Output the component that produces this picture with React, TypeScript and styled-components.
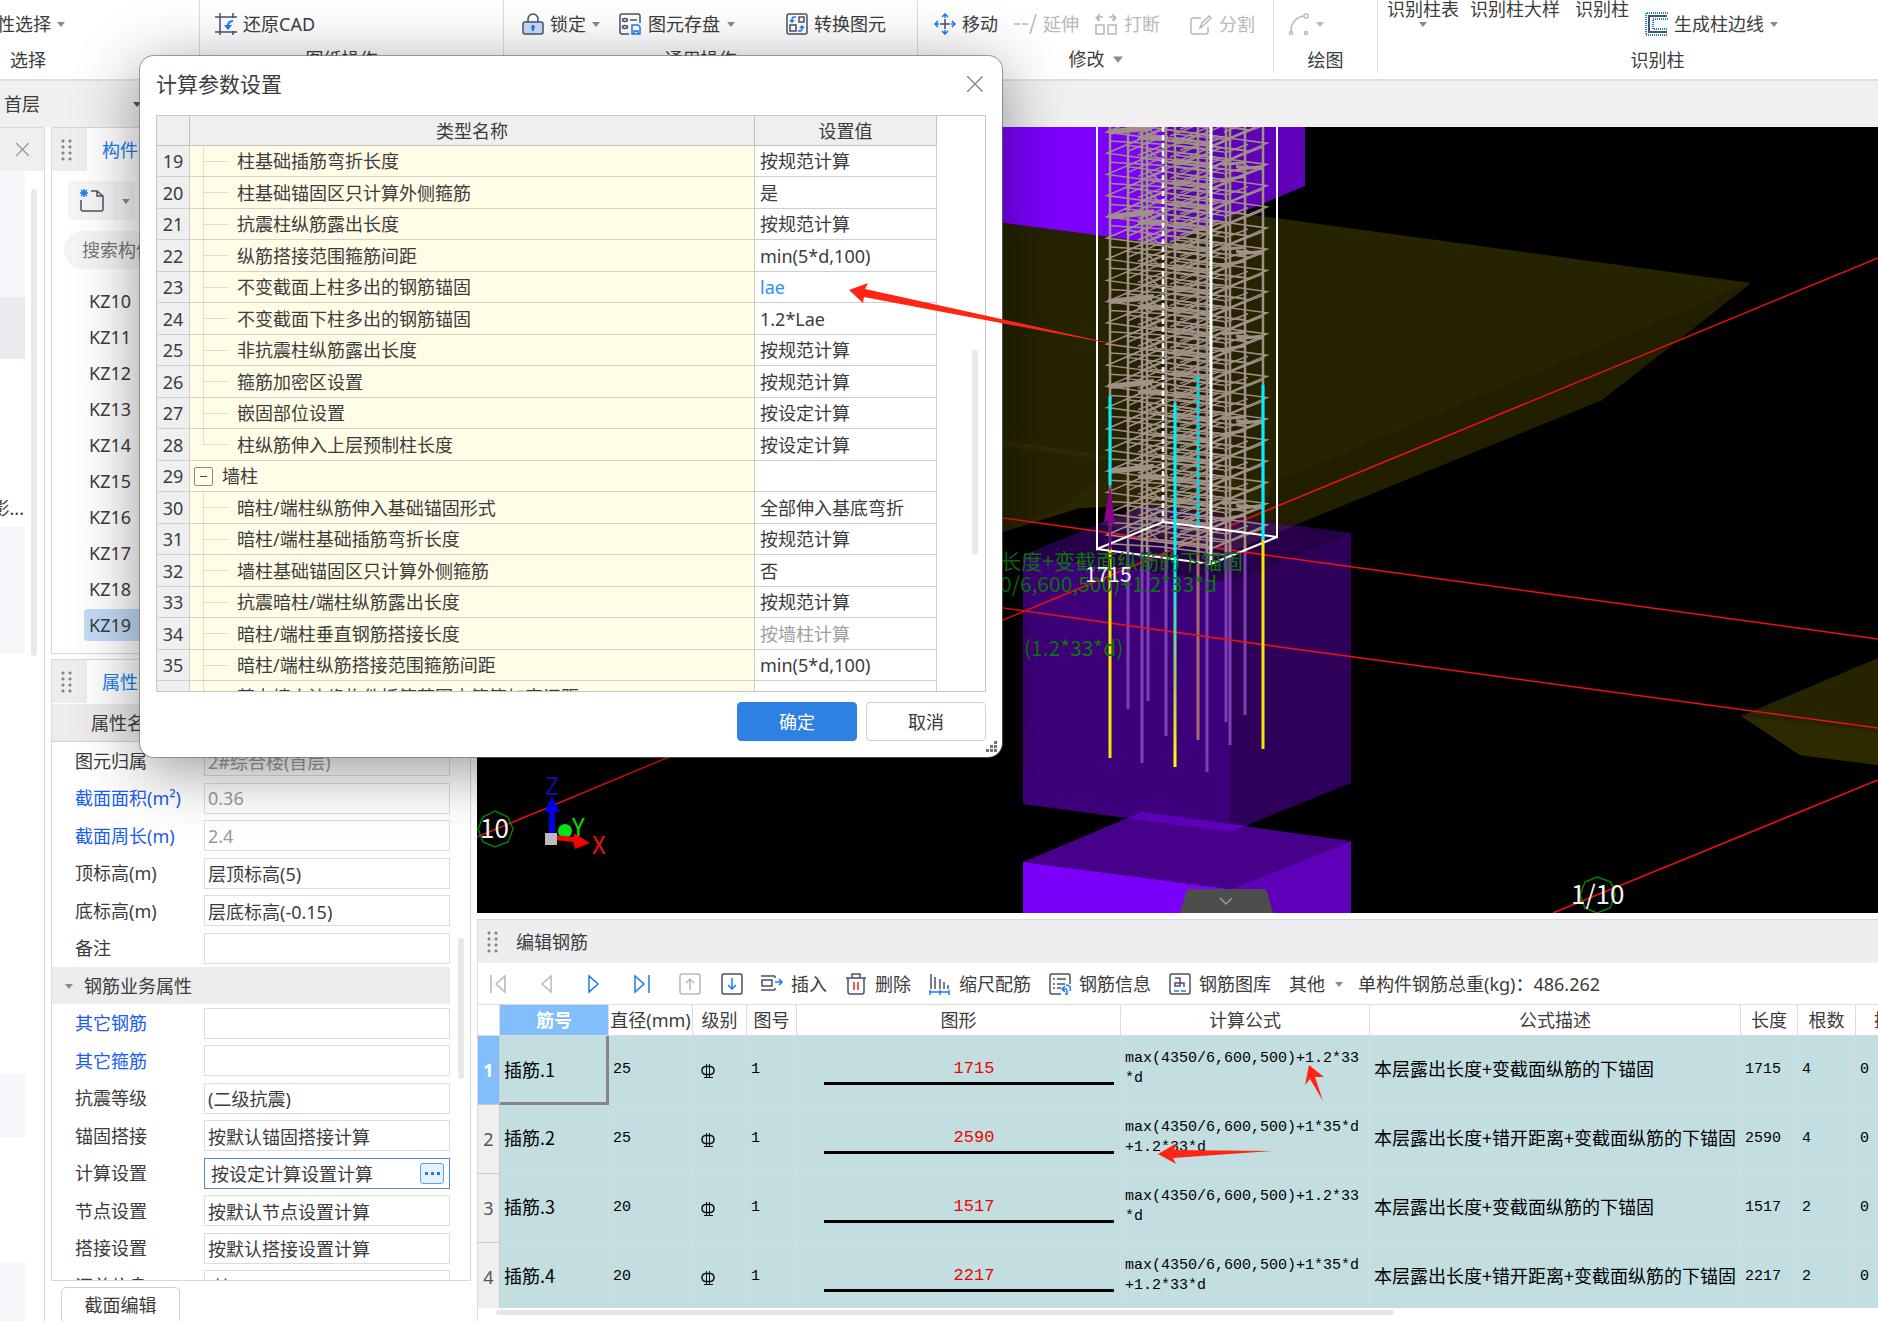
import React from 'react';
import styled, { createGlobalStyle, css } from 'styled-components';

const UI_FONT = '"Noto Sans", "Noto Sans CJK SC", sans-serif';
const MONO_FONT = '"Liberation Mono", "Noto Sans CJK SC", monospace';

const GlobalStyle = createGlobalStyle`
  *, *::before, *::after { box-sizing: border-box; }
  body { margin: 0; background: #fff; font-family: ${UI_FONT}; font-size: 18px; line-height: 24px; color: #3c3c3c; overflow: hidden; }
  button, input, select { font: inherit; color: inherit; margin: 0; padding: 0; border: 0; background: none; }
  svg { display: block; flex: none; }
`;

/* ---------- shared pieces ---------- */

const Page = styled.div`
  position: relative;
  display: flex;
  flex-direction: column;
  height: 100vh;
  overflow: hidden;
`;

const CaretSvg = styled.svg<{ $tone?: string }>`
  fill: ${p => p.$tone || '#8a8a8a'};
`;

const Caret = ({ tone, size = 8 }: { tone?: string; size?: number }) => (
  <CaretSvg $tone={tone} width={size} height={size} viewBox="0 0 8 8"><path d="M0 2h8L4 7z" /></CaretSvg>
);

const Grip = styled.span`
  flex: none;
  width: 11px;
  height: 22px;
  background: radial-gradient(circle at 2px 2px, #858585 1px, transparent 2px) 0 0 / 7px 6px;
`;

/* ---------- ribbon ---------- */

const Ribbon = styled.header`
  display: flex;
  flex: none;
  height: 81px;
  border-bottom: 2px solid #dedede;
  overflow: hidden;
`;

const Group = styled.section<{ $w: number }>`
  display: flex;
  flex-direction: column;
  flex: none;
  width: ${p => p.$w}px;
  height: 73px;
  border-right: 1px solid #dcdcdc;
`;

const Tools = styled.div<{ $pad: number }>`
  display: flex;
  align-items: center;
  height: 48px;
  padding-left: ${p => p.$pad}px;
`;

const GroupLabel = styled.div<{ $left?: number; $launcher?: boolean; $high?: boolean }>`
  display: flex;
  align-items: center;
  justify-content: ${p => (p.$left ? 'flex-start' : 'center')};
  gap: 8px;
  height: ${p => (p.$high ? 22 : 26)}px;
  padding-left: ${p => p.$left || 0}px;
  padding-right: ${p => (p.$launcher ? 20 : 0)}px;
`;

const Tool = styled.button<{ $before?: number; $off?: boolean; $gap?: number }>`
  display: flex;
  align-items: center;
  flex: none;
  gap: ${p => p.$gap ?? 6}px;
  margin-left: ${p => p.$before || 0}px;
  white-space: nowrap;
  color: ${p => (p.$off ? '#b8b8b8' : 'inherit')};
`;

const TallTool = styled.button<{ $before?: number }>`
  display: flex;
  flex-direction: column;
  align-items: center;
  flex: none;
  align-self: flex-start;
  gap: 2px;
  height: 30px;
  margin-left: ${p => p.$before || 0}px;
  line-height: 18px;
  white-space: nowrap;
`;

const TailClip = styled.span`
  display: flex;
  justify-content: flex-end;
  width: 51px;
  overflow: hidden;
`;

const Icon = ({ children, w = 22, h = 22 }: { children: React.ReactNode; w?: number; h?: number }) => (
  <svg width={w} height={h} viewBox={`0 0 ${w} ${h}`} fill="none" stroke="#4a5268" strokeWidth="1.5">{children}</svg>
);
const BLUE = '#1a7cf0';

const RestoreIcon = () => (
  <Icon><path d="M0 4h22M5 0v22M0 19h22M18 0v5M18 18v4" /><path d="M18 8c-4 0-5 2-5 5" stroke={BLUE} strokeWidth="2" /><path d="M9 12h8l-4 5z" fill={BLUE} stroke="none" /></Icon>
);
const LockIcon = () => (
  <Icon><path d="M6 10V6a5 5 0 0 1 10 0v4" /><rect x="1" y="9" width="20" height="12" rx="2" fill="#c9dcf6" /><circle cx="11" cy="14" r="2" fill={BLUE} stroke="none" /><path d="M11 14v4" stroke={BLUE} strokeWidth="2" /></Icon>
);
const SaveIcon = () => (
  <Icon><path d="M10 21H3a2 2 0 0 1-2-2V3a2 2 0 0 1 2-2h16a2 2 0 0 1 2 2v7" /><ellipse cx="6" cy="7" rx="2.5" ry="1.5" /><ellipse cx="6" cy="14" rx="2.5" ry="1.5" /><path d="M11 7h7" /><path d="M13 12h6l2 2v7h-8zM15 21v-3h4v3" stroke={BLUE} /></Icon>
);
const ConvertIcon = () => (
  <Icon><rect x="1" y="1" width="20" height="20" rx="2" /><rect x="13" y="4" width="5" height="5" /><rect x="4" y="12" width="6" height="6" /><path d="M10 4H8c-2 0-2 1-2 5M4 7l2 2 2-2M12 18h2c2 0 2-1 2-5M14 15l2-2 2 2" stroke={BLUE} /></Icon>
);
const MoveIcon = () => (
  <Icon><path d="M11 6v10M6 11h10" /><path d="M11 5V1M8 4l3-3 3 3M11 17v4M8 18l3 3 3-3M5 11H1M4 8l-3 3 3 3M17 11h4M18 8l3 3-3 3" stroke={BLUE} /></Icon>
);
const ExtendIcon = () => (
  <Icon w={24}><path d="M0 11h6M8 11h6M16 21l6-20" stroke="#b8b8b8" /></Icon>
);
const BreakIcon = () => (
  <Icon><path d="M1 12h8v9H1zM13 12h8v9h-8zM3 8V4h5M5 1L1 5l4 2M19 8V4h-5M17 1l4 4-4 2" stroke="#b8b8b8" /></Icon>
);
const SplitIcon = () => (
  <Icon><path d="M11 5H3a2 2 0 0 0-2 2v12a2 2 0 0 0 2 2h13a2 2 0 0 0 2-2v-5M10 15l2-5 7-7 2 2-7 7z" stroke="#b8b8b8" /></Icon>
);
const ArcIcon = () => (
  <Icon><path d="M3 18C3 9 9 4 16 3" stroke="#b8b8b8" /><circle cx="18" cy="3" r="2" stroke="#b8b8b8" /><circle cx="3" cy="20" r="1.5" stroke="#b8b8b8" /><circle cx="18" cy="20" r="1.5" stroke="#b8b8b8" /></Icon>
);
const EdgeIcon = () => (
  <Icon w={23} h={24}><path d="M23 1H1v22h22M23 7H8v10h15" stroke={BLUE} strokeWidth="2" strokeDasharray="1 1" /><path d="M22 4H4v16h18" strokeWidth="2" /></Icon>
);

const FloorBar = styled.div`
  display: flex;
  align-items: center;
  flex: none;
  height: 46px;
  padding-left: 4px;
  background: #f0f0f0;
`;

const FloorSelect = styled.select`
  appearance: none;
  width: 129px;
  outline: none;
`;

/* ---------- workspace ---------- */

const Workspace = styled.main`
  display: flex;
  flex: 1;
  min-height: 0;
  gap: 6px;
`;

const Rail = styled.aside`
  display: flex;
  flex-direction: column;
  flex: none;
  width: 45px;
  border-right: 1px solid #dadada;
  border-top: 1px solid #dadada;
`;

const RailHead = styled.div`
  display: flex;
  align-items: center;
  justify-content: flex-end;
  flex: none;
  height: 43px;
  padding-right: 15px;
  background: #efeff1;
`;

const RailBody = styled.div`
  display: flex;
  flex: 1;
  gap: 6px;
  min-height: 0;
`;

const RailItems = styled.div`
  width: 25px;
  overflow: hidden;
`;

const RailBlock = styled.div<{ $h: number; $tone?: string }>`
  display: flex;
  align-items: flex-end;
  justify-content: flex-end;
  height: ${p => p.$h}px;
  padding: 0 1px 7px 0;
  background: ${p => p.$tone || '#fff'};
  white-space: nowrap;
`;

const Thumb = styled.div<{ $top: number; $h: number }>`
  flex: none;
  width: 6px;
  height: ${p => p.$h}px;
  margin-top: ${p => p.$top}px;
  border-radius: 3px;
  background: #e8e8e8;
`;

const PlainButton = styled.button`
  display: flex;
  align-items: center;
  justify-content: center;
`;

const SideColumn = styled.aside`
  display: flex;
  flex-direction: column;
  flex: none;
  gap: 5px;
  width: 420px;
`;

const Panel = styled.section<{ $h?: number }>`
  display: flex;
  flex-direction: column;
  ${p => (p.$h ? css`flex: none; height: ${p.$h}px;` : css`flex: 1;`)}
  min-height: 0;
  overflow: hidden;
  border: 1px solid #d8d8da;
  background: #fff;
`;

const PanelTabs = styled.div`
  display: flex;
  flex: none;
  height: 43px;
  background: #ededf0;
`;

const GripBox = styled.div`
  display: flex;
  align-items: center;
  justify-content: center;
  width: 35px;
  padding-right: 6px;
`;

const PanelTab = styled.button`
  padding: 0 15px;
  background: #fff;
  color: #1a7cf0;
`;

const CompBody = styled.div`
  display: flex;
  flex-direction: column;
  padding: 10px 20px 0 12px;
`;

const SplitButton = styled.div`
  display: flex;
  width: 67px;
  height: 39px;
  margin-left: 4px;
  border-radius: 4px;
  background: #f5f5f6;

  button:last-child { width: 19px; border-left: 1px solid #e6e6e6; }
  button:first-child { flex: 1; }
`;

const Search = styled.input`
  height: 38px;
  margin-top: 11px;
  padding: 0 18px;
  border-radius: 19px;
  background: #f4f4f5;
  outline: none;

  &::placeholder { color: #777; opacity: 1; }
`;

const CompList = styled.ul`
  display: flex;
  flex-direction: column;
  gap: 4px;
  margin: 16px 0 0 20px;
  padding: 0;
  list-style: none;
`;

const CompItem = styled.li<{ $on: boolean }>`
  height: 32px;
  padding-left: 5px;
  border-radius: 4px;
  line-height: 32px;
  background: ${p => (p.$on ? '#c2dbf8' : 'transparent')};
`;

const PropHead = styled.div`
  flex: none;
  height: 38px;
  margin-top: 1px;
  padding-left: 39px;
  border-bottom: 1px solid #d0d0d0;
  background: #ececec;
  line-height: 38px;
`;

const PropBody = styled.div`
  display: flex;
  flex: 1;
  min-height: 0;
  gap: 8px;
  overflow: hidden;
`;

const PropRows = styled.div`
  flex: none;
  width: 398px;
`;

const PropRow = styled.div`
  display: grid;
  grid-template-columns: 129px minmax(0, 1fr);
  align-items: center;
  height: 37px;
  padding-left: 23px;

  &:nth-child(even) { height: 38px; }
`;

const PropLabel = styled.label<{ $link?: boolean }>`
  white-space: nowrap;
  color: ${p => (p.$link ? '#1a5cf0' : 'inherit')};
`;

const Field = styled.div<{ $active?: boolean }>`
  display: flex;
  align-items: center;
  height: 31px;
  padding: 0 5px 0 ${p => (p.$active ? 6 : 3)}px;
  border: 1px solid ${p => (p.$active ? '#5b86d8' : '#dcdcdc')};
`;

const FieldInput = styled.input<{ $dim?: boolean }>`
  flex: 1;
  min-width: 0;
  height: 27px;
  outline: none;
  color: ${p => (p.$dim ? '#9a9a9a' : '#3c3c3c')};
`;

const More = styled.button`
  display: flex;
  align-items: center;
  justify-content: center;
  gap: 3px;
  width: 24px;
  height: 21px;
  border: 1px solid #5aa0f0;
  border-radius: 3px;
  background: #e6f1fd;

  i { width: 3px; height: 3px; background: #1a7cf0; }
`;

const PropSection = styled.div`
  display: flex;
  align-items: center;
  gap: 11px;
  height: 37px;
  padding-left: 13px;
  background: #ececec;
`;

const SideFooter = styled.div`
  flex: none;
  height: 35px;
  padding: 1px 0 0 10px;
  overflow: hidden;
`;

const FootButton = styled.button`
  width: 119px;
  height: 36px;
  border: 1px solid #cfcfcf;
  border-radius: 5px;
  background: #fff;
`;

/* ---------- 3D view ---------- */

const Main = styled.div`
  display: flex;
  flex-direction: column;
  flex: 1;
  min-width: 0;
`;

const SceneBox = styled.div`
  flex: 1;
  min-height: 0;
  margin-bottom: 6px;
  overflow: hidden;
  background: #000;
`;

const BAR = '#a09088';
const verticalBars = [1110, 1128, 1142, 1147, 1166, 1175, 1198, 1207, 1226, 1230, 1245, 1263];
const stirrups = Array.from({ length: 20 }, (_, i) => 132 + i * 21.2);
const purpleBars: [number, number][] = [[1128, 709], [1142, 763], [1148, 701], [1166, 736], [1207, 772], [1226, 722], [1230, 745], [1245, 715]];

const Stirrup = ({ y, hooks }: { y: number; hooks: number }) => (
  <g transform={`translate(0 ${y})`}>
    <path d="M1107 0 1163-24 1267-10 1211 14z" />
    <path d="M1126-8 1144-16 1248-2 1230 6z" />
    <path d="M1142 5 1198-19 1232-15 1176 9z" />
    <path d="M1110 9 1160 12 1224 20M1180-3 1218-14M1168-12 1245-3M1150 4 1208 10M1128-2 1165-18M1216 12 1262-6" />
    <path d="M1170 4 1212-13M1146-6 1158 5M1176 2 1230 8M1172 7 1210 12M1176-8 1210-4M1174-16 1206-11M1224 0 1248-9M1138 2 1166-9M1178 12 1222-6" />
    {hooks === 0 && <path d="M1108-1 1154-6M1110 1 1152-3M1138 6 1168 8M1140 4 1168 5" strokeWidth="3" />}
    {hooks === 2 && <path d="M1236-8 1264-6M1238-5 1262-8M1222-10 1246-12M1220 6 1244 2" strokeWidth="3" />}
  </g>
);

const Scene = () => (
  <svg width="100%" height="100%" role="img" aria-label="三维视图">
    <defs>
      <linearGradient id="rebarFade" x1="0" y1="0" x2="0" y2="1">
        <stop offset="0" stopColor="#00e8ff" /><stop offset="0.55" stopColor="#a8c860" /><stop offset="1" stopColor="#ffff00" />
      </linearGradient>
      <clipPath id="columnClip"><path d="M1090 127H1285V537L1211 566 1097 551z" /></clipPath>
    </defs>
    <g transform="translate(-477 -127)">
      <path d="M960 175 1751 283 1602 400 1280 531 960 560z" fill="#262300" />
      <path d="M1751 283 1602 400 1280 531 1000 545 1150 528 1280 480z" fill="#221f00" />
      <path d="M1003 440 1110 456 1120 462 1003 446z" fill="#2e2a00" />
      <path d="M1003 531 1060 508 1105 474 1274 478 1264 510 1090 510 1003 540z" fill="#2b2700" />
      <path d="M960 532 1003 532 1080 508 1150 506 1280 531 1351 560 960 570z" fill="#000" />
      <path d="M1040 548 1145 505 1300 526 1351 533 1230 582 1023 556z" fill="#260048" />
      <path d="M1098 524 1145 505 1294 526 1230 552z" fill="#3a1448" />
      <path d="M960 127H1165V244L960 217z" fill="#7d00fd" />
      <path d="M1165 127H1305V186L1165 244z" fill="#6000b8" />
      <path d="M1741 716 1878 658V765L1800 755z" fill="#262300" />
      <path d="M1741 716 1878 732V765L1800 755z" fill="#2e2a00" />
      <path d="M1023 556 1230 582V832L1023 804z" fill="#3e007a" />
      <path d="M1230 582 1351 533V783L1230 832z" fill="#2e005a" />
      <path d="M1023 862 1142 812 1351 841 1230 889z" fill="#46008a" />
      <path d="M1128 818 1142 812 1246 826 1230 832z" fill="#5c00bc" />
      <path d="M1023 862 1230 889V920H1023z" fill="#7a00fa" />
      <path d="M1230 889 1351 841V920H1230z" fill="#5e00b8" />

      {purpleBars.map(([x, y]) => <path key={x} d={`M${x} 545V${y}`} stroke="#8040b4" strokeWidth="3" />)}
      <path d="M1198 520V740" stroke="#a46e6c" strokeWidth="3" />

      <g stroke="#f01010" strokeWidth="1.5" fill="none">
        <path d="M1878 258 1280 505 1003 620 669 757 477 837" />
        <path d="M1003 518 1280 557 1878 639M1003 608 1280 647 1878 728M1553 913 1878 780" />
      </g>

      <g clipPath="url(#columnClip)" stroke={BAR} strokeWidth="1.5" fill="none">
        {stirrups.map((y, i) => <Stirrup key={y} y={y} hooks={i % 4} />)}
        {verticalBars.map(x => <path key={x} d={`M${x} 127V552`} strokeWidth="2.5" />)}
      </g>

      <g stroke="#fff" fill="none">
        <path d="M1163 127V522" strokeWidth="2.5" strokeDasharray="5 3" />
        <path d="M1097 127V549L1163 522 1277 537V127M1097 549 1211 564 1277 537" strokeWidth="2" />
        <path d="M1211 127V564" strokeWidth="3" />
      </g>
      <g strokeWidth="3">
        <path d="M1110 396V485M1263 385V540M1175 403V565" stroke="#00f0ff" />
        <path d="M1198 376V525" stroke="#00d8e8" strokeDasharray="6 2" />
        <rect x="1173.5" y="565" width="3" height="202" fill="url(#rebarFade)" />
        <path d="M1110 548V758M1263 540V749" stroke="#f5e800" />
      </g>
      <path d="M1110 485 1115 523H1111V550H1109V521L1104 521z" fill="#8b008b" />

      <g fill="#0b760b" fontFamily='"Noto Sans CJK SC", sans-serif' fontSize="21">
        <text x="1243" y="569" textAnchor="end">本层露出长度+变截面纵筋的下锚固</text>
        <text x="1217" y="592" textAnchor="end">max(4350/6,600,500)+1.2*33*d</text>
        <text x="1024" y="656">(1.2*33*d)</text>
      </g>
      <g stroke="#0a800a" strokeWidth="1.5" fill="none">
        <path d="M495 811 508 817 513 829 508 842 495 847 483 842 478 829 483 817z" />
        <path d="M1597 877 1611 882 1615 895 1610 908 1597 913 1585 908 1580 895 1585 882z" />
      </g>
      <g fill="#f4f4f4" fontFamily='"Noto Sans CJK SC", sans-serif'>
        <text x="1085" y="582" fontSize="21">1715</text>
        <text x="480" y="838" fontSize="26">10</text>
        <text x="1571" y="904" fontSize="26">1/10</text>
      </g>

      <g fontFamily='"Noto Sans CJK SC", sans-serif' fontSize="24">
        <text x="545" y="795" fill="#1010c0">Z</text>
        <text x="572" y="836" fill="#00e000">Y</text>
        <text x="592" y="854" fill="#f01010">X</text>
      </g>
      <path d="M552 796 560 812H555V834H549V812H544z" fill="#0000e8" />
      <circle cx="565" cy="831" r="7" fill="#00e818" />
      <path d="M555 835 574 837 574 833 590 843 575 849 573 842 555 840z" fill="#f80000" />
      <path d="M545 833H557V845H545z" fill="#bcbcbc" />

      <path d="M1180 913 1186 892Q1187 889 1190 889H1263Q1266 889 1267 892L1273 913z" fill="#4d4d4d" />
      <path d="M1220 898 1226 904 1232 898" stroke="#9a9a9a" strokeWidth="1.5" fill="none" />
    </g>
  </svg>
);

/* ---------- rebar editor ---------- */

const Editor = styled.section`
  display: flex;
  flex-direction: column;
  flex: none;
  height: 402px;
  border-top: 1px solid #d8d8da;
  border-left: 1px solid #dadada;
`;

const EditorHead = styled.div`
  display: flex;
  align-items: center;
  flex: none;
  gap: 18px;
  height: 43px;
  padding-left: 9px;
  background: #eeeef0;
`;

const EditorTools = styled.div`
  display: flex;
  align-items: center;
  flex: none;
  height: 41px;
  padding-left: 9px;
  white-space: nowrap;
`;

const Total = styled.span`
  margin-left: 15px;
`;

const GridClip = styled.div`
  flex: none;
  height: 304px;
  overflow: hidden;
`;

const Grid = styled.table`
  width: 1451px;
  table-layout: fixed;
  border-collapse: separate;
  border-spacing: 0;
  font-family: ${MONO_FONT};
  font-size: 15px;
  line-height: 20px;
  color: #000;
`;

const HeadCell = styled.th<{ $on?: boolean }>`
  height: 32px;
  padding: 0;
  border: solid #dcdcdc;
  border-width: 1px 1px 1px 0;
  background: ${p => (p.$on ? '#82bdfc' : '#fff')};
  color: ${p => (p.$on ? '#fff' : '#3c3c3c')};
  font: ${p => (p.$on ? 700 : 400)} 18px/24px ${UI_FONT};
  white-space: nowrap;
`;

const RowNo = styled.th<{ $on?: boolean }>`
  height: 69px;
  padding: 0;
  border: solid #c8c8c8;
  border-width: 0 1px 1px 0;
  background: ${p => (p.$on ? '#82bdfc' : '#efefef')};
  color: ${p => (p.$on ? '#fff' : '#555')};
  font: ${p => (p.$on ? 700 : 400)} 18px/24px ${UI_FONT};
`;

const Cell = styled.td<{ $cjk?: boolean; $focus?: boolean }>`
  height: 69px;
  padding: 0 0 ${p => (p.$cjk && !p.$focus ? 4 : 0)}px 4px;
  border: solid #d6dcdc;
  border-width: 0 1px 1px 0;
  background: #c2dee0;
  white-space: nowrap;
  ${p => p.$cjk && css`font-family: "Noto Sans CJK SC", sans-serif; font-size: 18px; line-height: 24px;`}
  ${p => p.$focus && css`border-right: 3px solid #858585; border-bottom: 3px solid #858585;`}
`;

const Shape = styled.div`
  margin: 0 6px 0 23px;
  padding-left: 10px;
  border-bottom: 3px solid #000;
  color: #f00000;
  font-size: 17px;
  line-height: 26px;
  text-align: center;
`;

const Formula = styled.div`
  padding-bottom: 2px;
  white-space: pre;
`;

const HTrack = styled.div`
  padding: 2px 0 0 18px;
`;

const HThumb = styled.div`
  width: 65%;
  height: 5px;
  border-radius: 3px;
  background: #e6e6e6;
`;

const GradeIndent = styled.div`
  padding: 2px 0 0 4px;
`;

const GradeMark = () => (
  <svg width="14" height="15" viewBox="0 0 14 15" fill="none" stroke="#111" strokeWidth="1"><path d="M4.500 2.500H9.500Q13 3 13 6.500T9.500 10.500H4.500Q1 10 1 6.500T4.500 2.500z" strokeWidth="1.500" /><path d="M5.500 0v13M8.500 0v13M3 13.500h9" /></svg>
);

const rebars = [
  { id: '插筋.1', d: 25, len: 1715, n: 4, f: 'max(4350/6,600,500)+1.2*33\n*d', t: '本层露出长度+变截面纵筋的下锚固' },
  { id: '插筋.2', d: 25, len: 2590, n: 4, f: 'max(4350/6,600,500)+1*35*d\n+1.2*33*d', t: '本层露出长度+错开距离+变截面纵筋的下锚固' },
  { id: '插筋.3', d: 20, len: 1517, n: 2, f: 'max(4350/6,600,500)+1.2*33\n*d', t: '本层露出长度+变截面纵筋的下锚固' },
  { id: '插筋.4', d: 20, len: 2217, n: 2, f: 'max(4350/6,600,500)+1*35*d\n+1.2*33*d', t: '本层露出长度+错开距离+变截面纵筋的下锚固' },
];
const gridCols = [22, 109, 84, 54, 50, 324, 249, 371, 57, 58, 73];
const gridHeads = ['', '筋号', '直径(mm)', '级别', '图号', '图形', '计算公式', '公式描述', '长度', '根数', '搭接'];

/* ---------- dialog ---------- */

const Dialog = styled.section`
  position: absolute;
  top: 56px;
  left: 140px;
  display: flex;
  flex-direction: column;
  width: 862px;
  height: 701px;
  padding: 0 16px;
  border-radius: 14px;
  background: #fff;
  box-shadow: 0 0 0 1px rgba(110, 110, 110, 0.65), 0 12px 64px rgba(0, 0, 0, 0.42);
`;

const DialogHead = styled.div`
  display: flex;
  align-items: center;
  justify-content: space-between;
  flex: none;
  height: 59px;
  padding: 0 3px 4px 0;
`;

const DialogTitle = styled.h1`
  margin: 0;
  font-size: 21px;
  font-weight: 400;
  line-height: 28px;
`;

const ParamBox = styled.div`
  display: flex;
  flex: none;
  gap: 35px;
  height: 577px;
  border: 1px solid #c6c6c6;
  overflow: hidden;
`;

const Params = styled.table`
  flex: none;
  width: 780px;
  height: max-content;
  table-layout: fixed;
  border-collapse: separate;
  border-spacing: 0;

  th, td { padding: 0; border: solid #cfcfcf; border-width: 0 1px 1px 0; font-weight: 400; text-align: left; white-space: nowrap; }
  thead th { height: 30px; background: #efefef; border-color: #c2c2c2; text-align: center; }
  tbody th { background: #efefef; text-align: center; }
  tbody td:nth-child(2) { background: #fffde6; }
  tbody td:nth-child(3) { padding-left: 5px; }
`;

const ParamCell = styled.div<{ $tall: boolean }>`
  display: flex;
  align-items: center;
  height: ${p => (p.$tall ? 31 : 30)}px;
`;

const Branch = styled.span<{ $last?: boolean }>`
  flex: none;
  align-self: stretch;
  width: 25px;
  margin: 0 9px 0 13px;
  background:
    linear-gradient(#dcdce0, #dcdce0) 0 0 / 1px ${p => (p.$last ? '50%' : '100%')} no-repeat,
    linear-gradient(#dcdce0, #dcdce0) 0 50% / 25px 1px no-repeat;
`;

const Expander = styled.button`
  display: flex;
  align-items: center;
  justify-content: center;
  width: 19px;
  height: 19px;
  margin: 0 9px 0 4px;
  border: 1px solid #8a8a8a;
  border-radius: 2px;

  i { width: 7px; height: 1px; background: #444; }
`;

const Value = styled.span<{ $tone?: string }>`
  color: ${p => p.$tone || 'inherit'};
`;

const DialogFoot = styled.div`
  display: flex;
  justify-content: flex-end;
  gap: 9px;
  padding-top: 10px;
`;

const DialogButton = styled.button<{ $primary?: boolean }>`
  width: 120px;
  height: 39px;
  border: 1px solid ${p => (p.$primary ? '#2e80e2' : '#cfcfcf')};
  border-radius: 4px;
  background: ${p => (p.$primary ? '#2e80e2' : '#fff')};
  color: ${p => (p.$primary ? '#fff' : '#3c3c3c')};
`;

const ResizeGrip = styled.svg`
  position: absolute;
  right: 5px;
  bottom: 5px;
  fill: #70757c;
`;

type Param = { no: number; name: string; value: string; root?: boolean; last?: boolean; tone?: string };
const params: Param[] = [
  { no: 19, name: '柱基础插筋弯折长度', value: '按规范计算' },
  { no: 20, name: '柱基础锚固区只计算外侧箍筋', value: '是' },
  { no: 21, name: '抗震柱纵筋露出长度', value: '按规范计算' },
  { no: 22, name: '纵筋搭接范围箍筋间距', value: 'min(5*d,100)' },
  { no: 23, name: '不变截面上柱多出的钢筋锚固', value: 'lae', tone: '#2a90f8' },
  { no: 24, name: '不变截面下柱多出的钢筋锚固', value: '1.2*Lae' },
  { no: 25, name: '非抗震柱纵筋露出长度', value: '按规范计算' },
  { no: 26, name: '箍筋加密区设置', value: '按规范计算' },
  { no: 27, name: '嵌固部位设置', value: '按设定计算' },
  { no: 28, name: '柱纵筋伸入上层预制柱长度', value: '按设定计算', last: true },
  { no: 29, name: '墙柱', value: '', root: true },
  { no: 30, name: '暗柱/端柱纵筋伸入基础锚固形式', value: '全部伸入基底弯折' },
  { no: 31, name: '暗柱/端柱基础插筋弯折长度', value: '按规范计算' },
  { no: 32, name: '墙柱基础锚固区只计算外侧箍筋', value: '否' },
  { no: 33, name: '抗震暗柱/端柱纵筋露出长度', value: '按规范计算' },
  { no: 34, name: '暗柱/端柱垂直钢筋搭接长度', value: '按墙柱计算', tone: '#a0a0a0' },
  { no: 35, name: '暗柱/端柱纵筋搭接范围箍筋间距', value: 'min(5*d,100)' },
  { no: 36, name: '剪力墙上边缘构件插筋范围内箍筋加密间距', value: '100' },
];

const Annotations = styled.svg`
  position: absolute;
  inset: 0;
  pointer-events: none;
  fill: #ff2414;
`;

const CloseX = ({ size = 12 }: { size?: number }) => (
  <svg width={size} height={size} viewBox="0 0 16 16" stroke="#8c8c8c" strokeWidth="1.5"><path d="M0 0 16 16M16 0 0 16" /></svg>
);

type Prop = { label: string; value?: string; dim?: boolean; link?: boolean; active?: boolean; section?: boolean };
const props: Prop[] = [
  { label: '图元归属', value: '2#综合楼(首层)', dim: true },
  { label: '截面面积(m²)', value: '0.36', dim: true, link: true },
  { label: '截面周长(m)', value: '2.4', dim: true, link: true },
  { label: '顶标高(m)', value: '层顶标高(5)' },
  { label: '底标高(m)', value: '层底标高(-0.15)' },
  { label: '备注', value: '' },
  { label: '钢筋业务属性', section: true },
  { label: '其它钢筋', value: '', link: true },
  { label: '其它箍筋', value: '', link: true },
  { label: '抗震等级', value: '(二级抗震)' },
  { label: '锚固搭接', value: '按默认锚固搭接计算' },
  { label: '计算设置', value: '按设定计算设置计算', active: true },
  { label: '节点设置', value: '按默认节点设置计算' },
  { label: '搭接设置', value: '按默认搭接设置计算' },
  { label: '汇总信息', value: '(柱)' },
];

const NavIcon = ({ d, on }: { d: string; on?: boolean }) => (
  <svg width="22" height="22" viewBox="0 0 22 22" fill="none" stroke={on ? BLUE : '#b8b8b8'} strokeWidth="1.5"><path d={d} /></svg>
);

export default function App() {
  return (
    <Page>
      <GlobalStyle />
      <Ribbon>
        <Group $w={200}>
          <Tools $pad={0}>
            <Tool><TailClip>属性选择</TailClip><Caret /></Tool>
          </Tools>
          <GroupLabel $left={10}>选择</GroupLabel>
        </Group>
        <Group $w={304}>
          <Tools $pad={15}><Tool><RestoreIcon />还原CAD</Tool></Tools>
          <GroupLabel $launcher $high>图纸操作</GroupLabel>
        </Group>
        <Group $w={414}>
          <Tools $pad={18}>
            <Tool><LockIcon />锁定<Caret /></Tool>
            <Tool $before={19} $gap={7}><SaveIcon />图元存盘<Caret /></Tool>
            <Tool $before={51}><ConvertIcon />转换图元</Tool>
          </Tools>
          <GroupLabel $launcher $high>通用操作</GroupLabel>
        </Group>
        <Group $w={356}>
          <Tools $pad={16}>
            <Tool><MoveIcon />移动</Tool>
            <Tool $before={16} $off $gap={5}><ExtendIcon />延伸</Tool>
            <Tool $before={16} $off $gap={7}><BreakIcon />打断</Tool>
            <Tool $before={30} $off $gap={7}><SplitIcon />分割</Tool>
          </Tools>
          <GroupLabel $high>修改<Caret size={10} /></GroupLabel>
        </Group>
        <Group $w={104}>
          <Tools $pad={14}><Tool $off><ArcIcon /><Caret tone="#b8b8b8" /></Tool></Tools>
          <GroupLabel>绘图</GroupLabel>
        </Group>
        <Group $w={560}>
          <Tools $pad={9}>
            <TallTool>识别柱表<Caret /></TallTool>
            <TallTool $before={11}>识别柱大样</TallTool>
            <TallTool $before={15}>识别柱</TallTool>
            <Tool $before={16}><EdgeIcon />生成柱边线<Caret /></Tool>
          </Tools>
          <GroupLabel>识别柱</GroupLabel>
        </Group>
      </Ribbon>

      <FloorBar>
        <FloorSelect aria-label="楼层"><option>首层</option></FloorSelect>
        <Caret tone="#555" />
      </FloorBar>

      <Workspace>
        <Rail>
          <RailHead><PlainButton aria-label="关闭导航"><CloseX size={13} /></PlainButton></RailHead>
          <RailBody>
            <RailItems>
              <RailBlock $h={126} $tone="#f6f7fa" />
              <RailBlock $h={62} $tone="#eaebf0" />
              <RailBlock $h={168}>影...</RailBlock>
              <RailBlock $h={126} $tone="#f6f7fa" />
              <RailBlock $h={420} />
              <RailBlock $h={64} $tone="#f6f7fa" />
              <RailBlock $h={125} />
              <RailBlock $h={80} $tone="#f6f7fa" />
            </RailItems>
            <Thumb $top={18} $h={467} />
          </RailBody>
        </Rail>

        <SideColumn>
          <Panel $h={527}>
            <PanelTabs>
              <GripBox><Grip /></GripBox>
              <PanelTab>构件列表</PanelTab>
            </PanelTabs>
            <CompBody>
              <SplitButton>
                <PlainButton aria-label="新建">
                  <svg width="24" height="24" viewBox="0 0 24 24" fill="none" stroke="#4a5268" strokeWidth="1.5"><path d="M1 11v9a2 2 0 0 0 2 2h18a2 2 0 0 0 2-2V7l-6-5h-6M17 2v5h6" /><path d="M0 4h8M4 0v8M1 1l6 6M7 1 1 7" stroke={BLUE} /></svg>
                </PlainButton>
                <PlainButton aria-label="新建选项"><Caret /></PlainButton>
              </SplitButton>
              <Search aria-label="搜索构件" placeholder="搜索构件库..." />
              <CompList>
                {[10, 11, 12, 13, 14, 15, 16, 17, 18, 19].map(n => <CompItem key={n} $on={n === 19}>KZ{n}</CompItem>)}
              </CompList>
            </CompBody>
          </Panel>
          <Panel>
            <PanelTabs>
              <GripBox><Grip /></GripBox>
              <PanelTab>属性列表</PanelTab>
            </PanelTabs>
            <PropHead>属性名称</PropHead>
            <PropBody>
              <PropRows>
                {props.map((p, i) => p.section ? (
                  <PropSection key={p.label}><Caret />{p.label}</PropSection>
                ) : (
                  <PropRow key={p.label}>
                    <PropLabel htmlFor={`prop-${i}`} $link={p.link}>{p.label}</PropLabel>
                    <Field $active={p.active}>
                      <FieldInput id={`prop-${i}`} defaultValue={p.value} $dim={p.dim} />
                      {p.active && <More aria-label="更多"><i /><i /><i /></More>}
                    </Field>
                  </PropRow>
                ))}
              </PropRows>
              <Thumb $top={196} $h={141} />
            </PropBody>
          </Panel>
          <SideFooter><FootButton>截面编辑</FootButton></SideFooter>
        </SideColumn>

        <Main>
          <SceneBox><Scene /></SceneBox>
          <Editor>
            <EditorHead><Grip />编辑钢筋</EditorHead>
            <EditorTools>
              <Tool aria-label="第一个"><NavIcon d="M4 2v18M18 3v16L9 11z" /></Tool>
              <Tool $before={26} aria-label="上一个"><NavIcon d="M16 3v16L7 11z" /></Tool>
              <Tool $before={26} aria-label="下一个"><NavIcon on d="M6 3v16l9-8z" /></Tool>
              <Tool $before={26} aria-label="最后一个"><NavIcon on d="M18 2v18M4 3v16l9-8z" /></Tool>
              <Tool $before={26} aria-label="上移"><Icon><rect x="1" y="1" width="20" height="20" rx="2" stroke="#b8b8b8" /><path d="M11 17V6M7 10l4-4 4 4" stroke="#b8b8b8" /></Icon></Tool>
              <Tool $before={20} aria-label="下移"><Icon><rect x="1" y="1" width="20" height="20" rx="2" /><path d="M11 5v11M7 12l4 4 4-4" stroke={BLUE} /></Icon></Tool>
              <Tool $before={18} $gap={8}><Icon><path d="M0 3h14M0 17h14M1 7h10v6H1zM14 3v2M14 15v2" /><path d="M14 9h7M18 6l3 3-3 3" stroke={BLUE} /></Icon>插入</Tool>
              <Tool $before={18} $gap={8}><Icon><path d="M1 5h20M7 5V1h8v4M3 5v14a2 2 0 0 0 2 2h12a2 2 0 0 0 2-2V5" /><path d="M9 9v8M13 9v8" stroke="#e02828" /></Icon>删除</Tool>
              <Tool $before={18} $gap={8}><Icon><path d="M2 1v15M6 4v12M11 6v10M15 9v7M19 12v4" /><path d="M1 19h19M1 17v5M11 17v5M20 17v5" stroke={BLUE} /></Icon>缩尺配筋</Tool>
              <Tool $before={18} $gap={8}><Icon><path d="M12 21H3a2 2 0 0 1-2-2V3a2 2 0 0 1 2-2h16a2 2 0 0 1 2 2v8M8 6h9M8 11h8M8 15h4M4 6h2M4 11h2M4 15h2" /><path d="M17 12c4 0 5 3 4 6M13 16h5M16 13l-3 3 3 3M18 17v4h-2" stroke={BLUE} /></Icon>钢筋信息</Tool>
              <Tool $before={18} $gap={8}><Icon><rect x="1" y="1" width="20" height="20" rx="2" /><path d="M6 5h5v8H6v-3h9v4" /><path d="M5 18h5M12 18h5" stroke={BLUE} /></Icon>钢筋图库</Tool>
              <Tool $before={18} $gap={10}>其他<Caret /></Tool>
              <Total>单构件钢筋总重(kg)：486.262</Total>
            </EditorTools>
            <GridClip>
              <Grid>
                <colgroup>{gridCols.map((w, i) => <col key={i} width={w} />)}</colgroup>
                <thead>
                  <tr>{gridHeads.map((h, i) => <HeadCell key={i} $on={i === 1}>{h}</HeadCell>)}</tr>
                </thead>
                <tbody>
                  {rebars.map((r, i) => (
                    <tr key={r.id}>
                      <RowNo $on={i === 0}>{i + 1}</RowNo>
                      <Cell $cjk $focus={i === 0}>{r.id}</Cell>
                      <Cell>{r.d}</Cell>
                      <Cell><GradeIndent><GradeMark /></GradeIndent></Cell>
                      <Cell>1</Cell>
                      <Cell><Shape>{r.len}</Shape></Cell>
                      <Cell><Formula>{r.f}</Formula></Cell>
                      <Cell $cjk>{r.t}</Cell>
                      <Cell>{r.len}</Cell>
                      <Cell>{r.n}</Cell>
                      <Cell>0</Cell>
                    </tr>
                  ))}
                </tbody>
              </Grid>
            </GridClip>
            <HTrack><HThumb /></HTrack>
          </Editor>
        </Main>
      </Workspace>

      <Dialog role="dialog" aria-labelledby="dlg-title">
        <DialogHead>
          <DialogTitle id="dlg-title">计算参数设置</DialogTitle>
          <PlainButton aria-label="关闭"><CloseX size={16} /></PlainButton>
        </DialogHead>
        <ParamBox>
          <Params>
            <colgroup><col width={33} /><col width={565} /><col width={182} /></colgroup>
            <thead><tr><th aria-label="序号" /><th>类型名称</th><th>设置值</th></tr></thead>
            <tbody>
              {params.map((p, i) => (
                <tr key={p.no}>
                  <th>{p.no}</th>
                  <td>
                    <ParamCell $tall={i % 2 === 1}>
                      {p.root ? <Expander aria-label="折叠"><i /></Expander> : <Branch $last={p.last} />}
                      {p.name}
                    </ParamCell>
                  </td>
                  <td><Value $tone={p.tone}>{p.value}</Value></td>
                </tr>
              ))}
            </tbody>
          </Params>
          <Thumb $top={234} $h={205} />
        </ParamBox>
        <DialogFoot>
          <DialogButton $primary>确定</DialogButton>
          <DialogButton>取消</DialogButton>
        </DialogFoot>
        <ResizeGrip width="11" height="11" viewBox="0 0 11 11"><path d="M8 0h3v3H8zM4 4h3v3H4zM8 4h3v3H8zM0 8h3v3H0zM4 8h3v3H4zM8 8h3v3H8z" /></ResizeGrip>
      </Dialog>

      <Annotations width="100%" height="100%" aria-hidden="true">
        <path d="M849 290 868 283 865 289 1123 346 864 297 863 303z" />
        <path d="M1309 1065 1324 1077 1315 1077 1323 1101 1310 1079 1305 1085z" />
        <path d="M1158 1154 1177 1143 1174 1150 1272 1151 1173 1158 1176 1164z" />
      </Annotations>
    </Page>
  );
}
